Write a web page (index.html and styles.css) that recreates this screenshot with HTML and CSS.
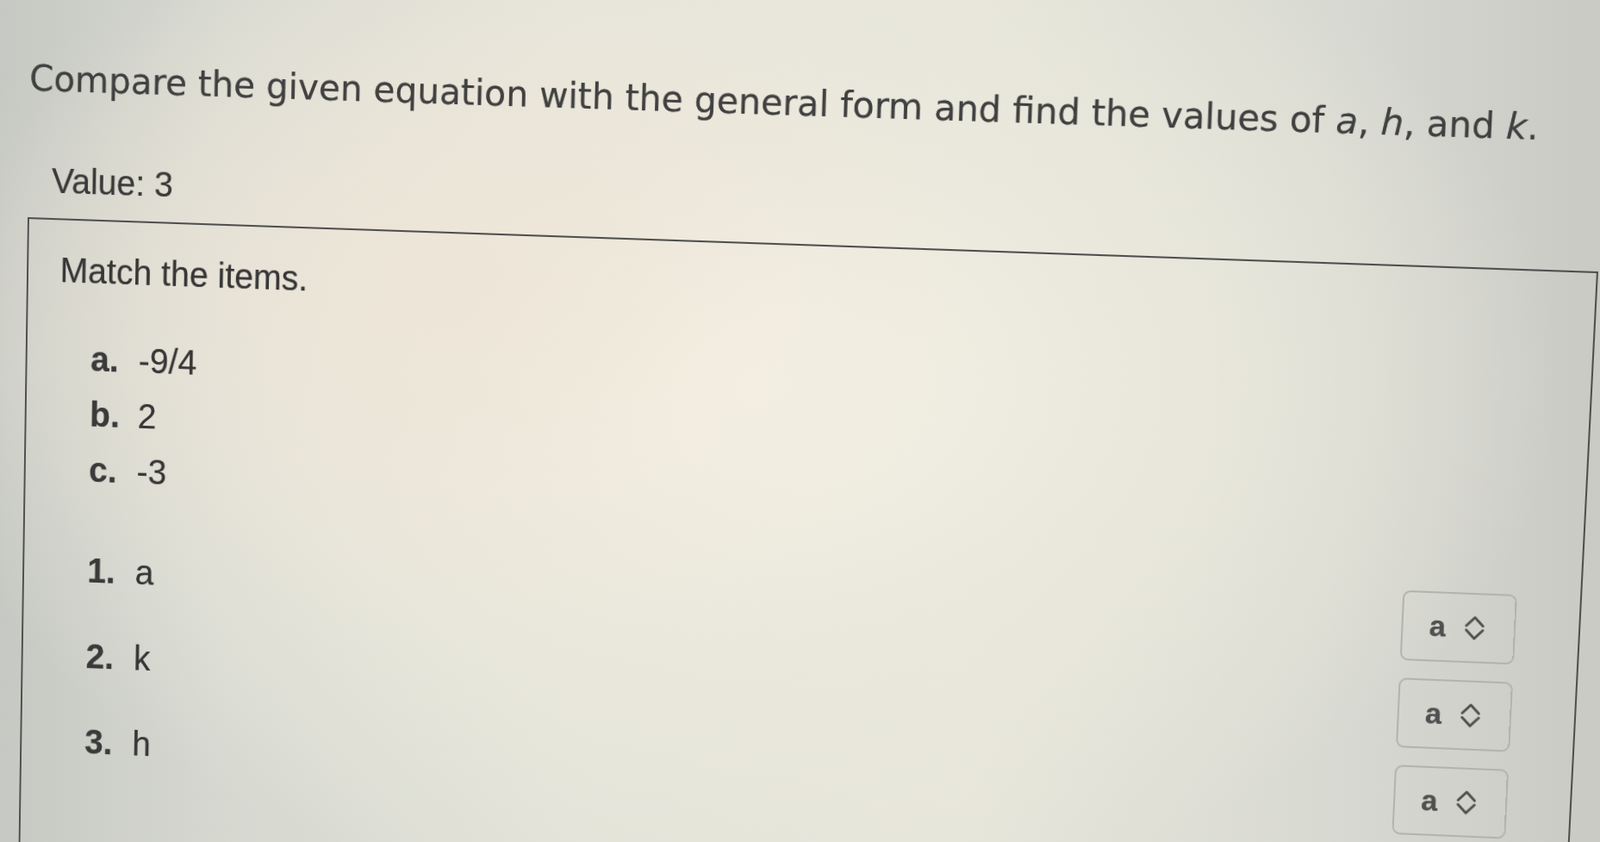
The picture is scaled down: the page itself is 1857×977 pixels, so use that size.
FILE: index.html
```html
<!DOCTYPE html>
<html lang="en">
<head>
<meta charset="utf-8">
<title>Match the items</title>
<link rel="stylesheet" href="styles.css">
</head>
<body>
<div class="page">
  <h1 class="title">Compare the given equation with the general form and find the values of <i>a</i>, <i>h</i>, and <i>k</i>.</h1>
  <div class="value">Value: 3</div>
  <section class="card">
    <p class="prompt">Match the items.</p>
    <ol class="choices">
      <li><span class="lbl">a.</span>-9/4</li>
      <li><span class="lbl">b.</span>2</li>
      <li><span class="lbl">c.</span>-3</li>
    </ol>
    <div class="rows">
      <div class="row">
        <span class="item"><span class="lbl">1.</span>a</span>
        <div class="select"><span class="sel-val">a</span><svg class="chev" viewBox="0 0 24 30" width="24" height="30"><path d="M2.5 12.5 L12 3 L21.5 12.5 M2.5 17.5 L12 27 L21.5 17.5"/></svg></div>
      </div>
      <div class="row">
        <span class="item"><span class="lbl">2.</span>k</span>
        <div class="select"><span class="sel-val">a</span><svg class="chev" viewBox="0 0 24 30" width="24" height="30"><path d="M2.5 12.5 L12 3 L21.5 12.5 M2.5 17.5 L12 27 L21.5 17.5"/></svg></div>
      </div>
      <div class="row">
        <span class="item"><span class="lbl">3.</span>h</span>
        <div class="select"><span class="sel-val">a</span><svg class="chev" viewBox="0 0 24 30" width="24" height="30"><path d="M2.5 12.5 L12 3 L21.5 12.5 M2.5 17.5 L12 27 L21.5 17.5"/></svg></div>
      </div>
    </div>
  </section>
</div>
</body>
</html>
```

FILE: styles.css
```css
html, body {
  margin: 0;
  padding: 0;
  width: 100%;
  height: 100%;
  overflow: hidden;
}

body {
  background:
    radial-gradient(ellipse 620px 420px at 520px 330px, rgba(238, 226, 212, 0.6) 0%, rgba(238, 226, 212, 0) 100%),
    radial-gradient(ellipse 950px 620px at 860px 440px, #f4f2e5 0%, #ebe9dd 45%, rgba(226, 226, 217, 0) 100%),
    linear-gradient(90deg, #c6c9c3 0%, #d6d8d0 14%, #e2e2d8 35%, #e6e5da 60%, #d9dad2 82%, #c9cac4 100%);
}

.page {
  width: 1857px;
  box-sizing: border-box;
  padding: 69px 0 0 32px;
  transform-origin: 0 0;
  transform: matrix3d(0.976539, 0.0305746, 0, -0.0000126473,
                      -0.0138545, 1.017036, 0, 0.0000198157,
                      0, 0, 1, 0,
                      4.24209, -5.27119, 0, 0.995411);
  color: #3a3a3a;
  text-shadow: 0 0 0.7px rgba(40, 40, 40, 0.55);
}

.title {
  margin: 0;
  font-family: "DejaVu Sans", Verdana, sans-serif;
  font-weight: 400;
  font-size: 41px;
  line-height: 48px;
  white-space: nowrap;
  color: #404040;
}

.title i {
  font-style: italic;
}

.value {
  margin: 67.5px 0 0 28px;
  font-family: "Liberation Sans", Arial, sans-serif;
  font-size: 40px;
  line-height: 48px;
  color: #3a3a3a;
}

.card {
  margin-top: 19.5px;
  width: 1823px;
  box-sizing: border-box;
  border: 2.5px solid #4e4e4e;
  border-bottom: none;
  padding: 32.5px 72px 160px 37.5px;
  font-family: "Liberation Sans", Arial, sans-serif;
  font-size: 40px;
  line-height: 48px;
  color: #363636;
}

.prompt {
  margin: 0;
}

.choices {
  list-style: none;
  margin: 45px 0 0;
  padding: 0 0 0 38px;
  line-height: 64px;
}

.lbl {
  display: inline-block;
  width: 57px;
  font-weight: 700;
  color: #3a3a3a;
}

.rows {
  margin-top: 38.5px;
  padding-left: 38px;
}

.row {
  height: 100px;
  display: flex;
  align-items: center;
  justify-content: space-between;
}

.item {
  margin-bottom: 6px;
}

.select {
  width: 131px;
  height: 80px;
  box-sizing: border-box;
  border: 2px solid #b2b3ad;
  border-radius: 9px;
  display: flex;
  align-items: center;
  padding-left: 30px;
  gap: 21px;
  font-family: "Liberation Sans", Arial, sans-serif;
  font-weight: 700;
  font-size: 34px;
  line-height: 1;
  color: #505050;
}

.sel-val {
  margin-top: -3px;
}

.chev {
  display: block;
  fill: none;
  stroke: #515151;
  stroke-width: 3;
  stroke-linecap: round;
  stroke-linejoin: round;
}
```
